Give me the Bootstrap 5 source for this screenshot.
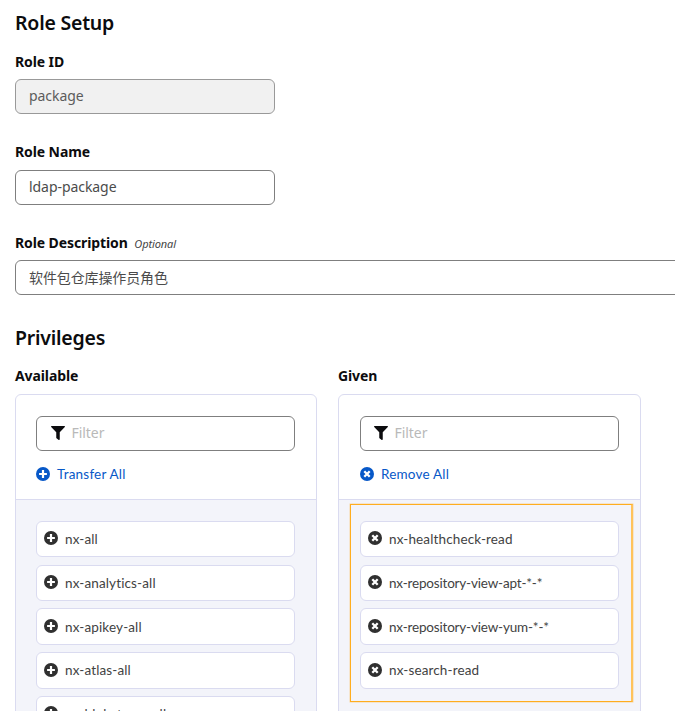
<!DOCTYPE html>
<html lang="en">
<head>
<meta charset="utf-8">
<meta name="viewport" content="width=device-width, initial-scale=1">
<title>Role Setup</title>
<link href="https://cdn.jsdelivr.net/npm/bootstrap@5.3.0/dist/css/bootstrap.min.css" rel="stylesheet">
<style>
  html, body { height: 711px; overflow: hidden; }
  body { font-family: "Noto Sans", "Noto Sans CJK SC", sans-serif; font-size: 14px; color: #0c0c0e; background: #fff; }
  .page { padding: 9px 0 0 15px; width: 675px; height: 711px; overflow: hidden; }
  .section-title { font-size: 19.5px; line-height: 28px; font-weight: 600; letter-spacing: -.22px; margin-bottom: 15px; }
  .transfer-title { margin-bottom: 14px; }
  .field-label { font-size: 14px; line-height: 20px; height: 20px; font-weight: 700; letter-spacing: -.1px; margin-bottom: 7px; display: block; }
  .list-label { margin-bottom: 8px; }
  .name-label { margin-top: -.5px; margin-bottom: 7.5px; }
  .field-hint { font-size: 11px; font-style: italic; font-weight: 400; color: #444; margin-left: 3px; letter-spacing: -.1px; }
  .field-box { height: 35px; padding: 0 13px 2px; border: 1px solid #7f7f7f; border-radius: 6px; font-size: 14px; color: #4b4b4b; background: #fff; letter-spacing: -.06px; }
  .field-box:disabled { background: #f1f1f1; border-color: #999; color: #5c5c5c; opacity: 1; }
  .field-box::placeholder { color: #b9b9b9; }
  .short-field { width: 260px; }
  .wide-field { width: 700px; padding-bottom: 1px; letter-spacing: -.12px; }
  .field-group { margin-bottom: 28.5px; }
  .transfer { gap: 21px; }
  .transfer-half { width: 302px; }
  .transfer-half + .transfer-half { width: 303px; }
  .panel { border: 1px solid #dadbf0; border-radius: 6px 6px 0 0; height: 340px; }
  .panel-head { padding: 21px 21px 0 20px; height: 105px; border-bottom: 1px solid #dadbf0; }
  .transfer-half + .transfer-half .panel-head, .transfer-half + .transfer-half .panel-list { padding-left: 21px; }
  .panel-list { background: #f3f4fa; padding: 21.4px 21px 0 20px; height: 240px; gap: 7.3px; }
  .filter-glyph { left: 14.5px; top: 10px; }
  .filter-box { padding-left: 34.5px; }
  .transfer-half + .transfer-half .filter-glyph { left: 13.5px; }
  .transfer-half + .transfer-half .filter-box { padding-left: 33.5px; }
  .bulk-link, .entry { font-family: Lato, sans-serif; font-size: 13.5px; font-variant-ligatures: none; letter-spacing: .13px; }
  .bulk-link { color: #0758c8; margin-top: 13px; height: 20px; gap: 7px; line-height: 20px; letter-spacing: .2px; }
  .entry { flex: 0 0 36.5px; height: 36.5px; border: 1px solid #dadbf0; border-radius: 6px; background: #fff; color: #424242; padding-left: 7px; gap: 7px; }
  .entry svg { position: relative; top: -1px; color: #303030; }
  .entry-long { letter-spacing: -.18px; }
  .marker { left: 11px; top: 4px; width: 283px; height: 198px; border: 1.5px solid #ffad1f; border-right-width: 2px; border-right-color: #ffc35b; box-shadow: 0 0 0 .5px rgba(255,173,31,.4); }
</style>
</head>
<body>
<svg width="0" height="0" class="position-absolute" aria-hidden="true">
  <symbol id="plus" viewBox="0 0 14 14"><circle cx="7" cy="7" r="7" fill="currentColor"/><path d="M7 3.100v7.800M3.100 7h7.800" stroke="#fff" stroke-width="2.2"/></symbol>
  <symbol id="cross" viewBox="0 0 14 14"><circle cx="7" cy="7" r="7" fill="currentColor"/><path d="M4.300 4.300l5.400 5.400M9.700 4.300l-5.400 5.400" stroke="#fff" stroke-width="2.3"/></symbol>
  <symbol id="funnel" viewBox="0 0 512 512"><path fill="currentColor" d="M488 0H24C2.700 0-8 25.900 7.050 40.970L192 225.900V432c0 7.800 3.800 15.200 10.200 19.700l80 56C298 518.700 320 507.500 320 488V225.900L504.900 41C520 25.900 509.300 0 488 0z"/></symbol>
</svg>
<main class="page">
  <h1 class="section-title">Role Setup</h1>
  <div class="field-group">
    <label class="field-label" for="rid">Role ID</label>
    <input id="rid" class="form-control field-box short-field" value="package" disabled>
  </div>
  <div class="field-group">
    <label class="field-label name-label" for="rname">Role Name</label>
    <input id="rname" class="form-control field-box short-field" value="ldap-package">
  </div>
  <div class="field-group">
    <label class="field-label" for="rdesc">Role Description <span class="field-hint">Optional</span></label>
    <input id="rdesc" class="form-control field-box wide-field" value="软件包仓库操作员角色">
  </div>
  <h2 class="section-title transfer-title">Privileges</h2>
  <div class="transfer d-flex">
    <section class="transfer-half">
      <span class="field-label list-label">Available</span>
      <div class="panel">
        <div class="panel-head">
          <div class="position-relative">
            <svg class="filter-glyph position-absolute" width="14" height="14"><use href="#funnel"/></svg>
            <input class="form-control field-box filter-box" placeholder="Filter" aria-label="Filter available">
          </div>
          <div class="bulk-link d-flex align-items-center"><svg width="14" height="14"><use href="#plus"/></svg><span>Transfer All</span></div>
        </div>
        <div class="panel-list d-flex flex-column">
          <div class="entry d-flex align-items-center"><svg width="14" height="14"><use href="#plus"/></svg><span>nx-all</span></div>
          <div class="entry d-flex align-items-center"><svg width="14" height="14"><use href="#plus"/></svg><span>nx-analytics-all</span></div>
          <div class="entry d-flex align-items-center"><svg width="14" height="14"><use href="#plus"/></svg><span>nx-apikey-all</span></div>
          <div class="entry d-flex align-items-center"><svg width="14" height="14"><use href="#plus"/></svg><span>nx-atlas-all</span></div>
          <div class="entry d-flex align-items-center"><svg width="14" height="14"><use href="#plus"/></svg><span>nx-blobstores-all</span></div>
        </div>
      </div>
    </section>
    <section class="transfer-half">
      <span class="field-label list-label">Given</span>
      <div class="panel">
        <div class="panel-head">
          <div class="position-relative">
            <svg class="filter-glyph position-absolute" width="14" height="14"><use href="#funnel"/></svg>
            <input class="form-control field-box filter-box" placeholder="Filter" aria-label="Filter given">
          </div>
          <div class="bulk-link d-flex align-items-center"><svg width="14" height="14"><use href="#cross"/></svg><span>Remove All</span></div>
        </div>
        <div class="panel-list d-flex flex-column position-relative">
          <div class="entry d-flex align-items-center"><svg width="14" height="14"><use href="#cross"/></svg><span>nx-healthcheck-read</span></div>
          <div class="entry entry-long d-flex align-items-center"><svg width="14" height="14"><use href="#cross"/></svg><span>nx-repository-view-apt-*-*</span></div>
          <div class="entry entry-long d-flex align-items-center"><svg width="14" height="14"><use href="#cross"/></svg><span>nx-repository-view-yum-*-*</span></div>
          <div class="entry d-flex align-items-center"><svg width="14" height="14"><use href="#cross"/></svg><span>nx-search-read</span></div>
          <div class="marker position-absolute"></div>
        </div>
      </div>
    </section>
  </div>
</main>
<script src="https://cdn.jsdelivr.net/npm/bootstrap@5.3.0/dist/js/bootstrap.bundle.min.js"></script>
</body>
</html>
